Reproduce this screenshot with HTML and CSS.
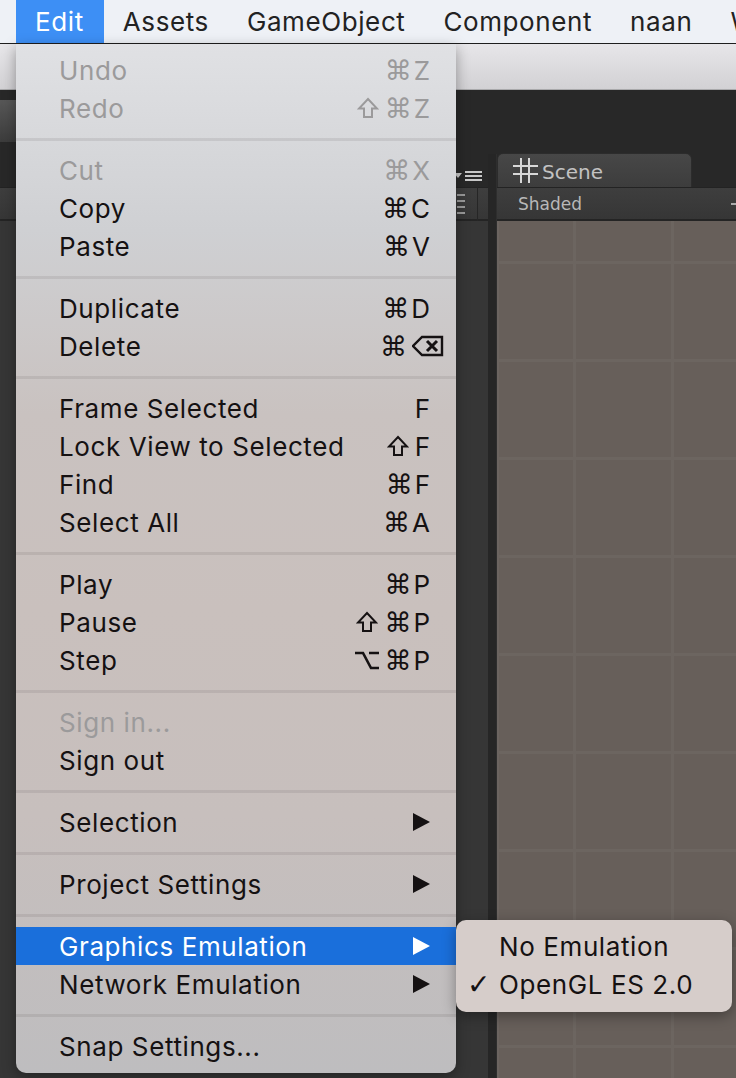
FILE: index.html
```html
<!DOCTYPE html>
<html>
<head>
<meta charset="utf-8">
<link rel="stylesheet" href="styles.css">
</head>
<body>
<div class="screen">
  <div class="menubar">
    <span class="mb-item active">Edit</span>
    <span class="mb-item">Assets</span>
    <span class="mb-item">GameObject</span>
    <span class="mb-item">Component</span>
    <span class="mb-item">naan</span>
    <span class="mb-item">Window</span>
  </div>
  <div class="light-toolbar"></div>
  <div class="workspace">
    <div class="toolstrip"><div class="toolbtns"></div></div>
    <div class="panels">
      <div class="left-panel">
        <div class="tabbar left-tabbar">
          <svg class="tabmenu" width="30" height="14" viewBox="0 0 30 14">
            <polygon points="0,4 8,4 4,9" fill="#c8c8c8"/>
            <rect x="11" y="2" width="17" height="2" fill="#c8c8c8"/>
            <rect x="11" y="6" width="17" height="2" fill="#c8c8c8"/>
            <rect x="11" y="10" width="17" height="2" fill="#c8c8c8"/>
          </svg>
        </div>
        <div class="panel-toolbar left-toolbar">
          <div class="grip"></div>
          <div class="vline"></div>
        </div>
        <div class="panel-body"></div>
      </div>
      <div class="divider"></div>
      <div class="scene-panel">
        <div class="tabbar scene-tabbar">
          <div class="tab">
            <svg class="hash" width="25" height="25" viewBox="0 0 25 25">
              <g fill="#d8d8d8">
                <rect x="7" y="0" width="2" height="25"/>
                <rect x="15" y="0" width="2" height="25"/>
                <rect x="0" y="7" width="25" height="2"/>
                <rect x="0" y="15" width="25" height="2"/>
              </g>
            </svg>
            <span class="tab-label">Scene</span>
          </div>
        </div>
        <div class="panel-toolbar scene-toolbar">
          <span class="shaded">Shaded</span>
          <span class="tb-caret"></span>
        </div>
        <div class="scene-view"></div>
      </div>
    </div>
  </div>

  <div class="menu">
    <div class="item disabled"><span class="label">Undo</span><span class="sc"><span class="sym">⌘</span>Z</span></div>
    <div class="item disabled"><span class="label">Redo</span><span class="sc"><svg class="shift" width="22" height="22" viewBox="0 0 22 22"><path d="M11 2 L20 11.5 H15 V20 H7 V11.5 H2 Z" fill="none" stroke="currentColor" stroke-width="2" stroke-linejoin="miter"/></svg><span class="sym">⌘</span>Z</span></div>
    <div class="sep"></div>
    <div class="item disabled"><span class="label">Cut</span><span class="sc"><span class="sym">⌘</span>X</span></div>
    <div class="item"><span class="label">Copy</span><span class="sc"><span class="sym">⌘</span>C</span></div>
    <div class="item"><span class="label">Paste</span><span class="sc"><span class="sym">⌘</span>V</span></div>
    <div class="sep"></div>
    <div class="item"><span class="label">Duplicate</span><span class="sc"><span class="sym">⌘</span>D</span></div>
    <div class="item"><span class="label">Delete</span><span class="sc wide"><span class="sym">⌘</span><svg class="erase" width="32" height="22" viewBox="0 0 32 22"><path d="M10 2 H30 V20 H10 L1 11 Z" fill="none" stroke="currentColor" stroke-width="2.4" stroke-linejoin="miter"/><path d="M15 6 L25 16 M25 6 L15 16" stroke="currentColor" stroke-width="3"/></svg></span></div>
    <div class="sep"></div>
    <div class="item"><span class="label">Frame Selected</span><span class="sc">F</span></div>
    <div class="item"><span class="label">Lock View to Selected</span><span class="sc"><svg class="shift" width="22" height="22" viewBox="0 0 22 22"><path d="M11 2 L20 11.5 H15 V20 H7 V11.5 H2 Z" fill="none" stroke="currentColor" stroke-width="2" stroke-linejoin="miter"/></svg>F</span></div>
    <div class="item"><span class="label">Find</span><span class="sc"><span class="sym">⌘</span>F</span></div>
    <div class="item"><span class="label">Select All</span><span class="sc"><span class="sym">⌘</span>A</span></div>
    <div class="sep"></div>
    <div class="item"><span class="label">Play</span><span class="sc"><span class="sym">⌘</span>P</span></div>
    <div class="item"><span class="label">Pause</span><span class="sc"><svg class="shift" width="22" height="22" viewBox="0 0 22 22"><path d="M11 2 L20 11.5 H15 V20 H7 V11.5 H2 Z" fill="none" stroke="currentColor" stroke-width="2" stroke-linejoin="miter"/></svg><span class="sym">⌘</span>P</span></div>
    <div class="item"><span class="label">Step</span><span class="sc"><svg class="opt" width="26" height="20" viewBox="0 0 26 20"><path d="M1 3 H9 L17 18 H25 M15 3 H25" fill="none" stroke="currentColor" stroke-width="2.6"/></svg><span class="sym">⌘</span>P</span></div>
    <div class="sep"></div>
    <div class="item disabled"><span class="label">Sign in...</span></div>
    <div class="item"><span class="label">Sign out</span></div>
    <div class="sep"></div>
    <div class="item"><span class="label">Selection</span><svg class="arrow" width="17" height="18" viewBox="0 0 17 18"><polygon points="0,0 17,9 0,18"/></svg></div>
    <div class="sep"></div>
    <div class="item"><span class="label">Project Settings</span><svg class="arrow" width="17" height="18" viewBox="0 0 17 18"><polygon points="0,0 17,9 0,18"/></svg></div>
    <div class="sep"></div>
    <div class="item selected"><span class="label">Graphics Emulation</span><svg class="arrow" width="17" height="18" viewBox="0 0 17 18"><polygon points="0,0 17,9 0,18"/></svg></div>
    <div class="item"><span class="label">Network Emulation</span><svg class="arrow" width="17" height="18" viewBox="0 0 17 18"><polygon points="0,0 17,9 0,18"/></svg></div>
    <div class="sep"></div>
    <div class="item"><span class="label">Snap Settings...</span></div>
  </div>

  <div class="submenu">
    <div class="sub-item"><span class="check"></span><span class="label">No Emulation</span></div>
    <div class="sub-item"><span class="check">✓</span><span class="label">OpenGL ES 2.0</span></div>
  </div>
</div>
</body>
</html>
```

FILE: styles.css
```css
* { box-sizing: border-box; }
html, body { margin: 0; padding: 0; }
body {
  width: 736px;
  height: 1078px;
  overflow: hidden;
  background: #333;
  font-family: "Inter", "Liberation Sans", sans-serif;
}
.screen {
  position: relative;
  width: 736px;
  height: 1078px;
  display: flex;
  flex-direction: column;
  overflow: hidden;
}

/* menubar */
.menubar {
  height: 44px;
  flex: none;
  display: flex;
  align-items: stretch;
  padding-left: 16px;
  background: #eef1f6;
  border-bottom: 1px solid #1e1e1e;
  white-space: nowrap;
  overflow: hidden;
}
.mb-item {
  display: flex;
  align-items: center;
  padding: 0 19px;
  font-size: 26px;
  color: #222;
  letter-spacing: 0.6px;
}
.mb-item.active {
  background: #3d8ff5;
  color: #fff;
  padding-right: 20px;
}

.light-toolbar {
  height: 46px;
  flex: none;
  background: linear-gradient(#e7e6e9, #d2d1d4);
  border-bottom: 1px solid #a9a9ab;
}

.workspace {
  flex: 1;
  display: flex;
  flex-direction: column;
  background: #282828;
}
.toolstrip {
  height: 64px;
  flex: none;
  padding-top: 10px;
}
.toolbtns {
  width: 200px;
  height: 42px;
  background: linear-gradient(#575757, #3c3c3c);
  border-right: 1px solid #222;
}
.panels {
  flex: 1;
  display: flex;
}
.left-panel {
  width: 488px;
  display: flex;
  flex-direction: column;
  flex: none;
}
.tabbar {
  height: 33px;
  flex: none;
  background: #282828;
  display: flex;
}
.left-tabbar {
  justify-content: flex-end;
  align-items: center;
  padding-right: 4px;
  padding-top: 10px;
}
.panel-toolbar {
  height: 34px;
  flex: none;
  background: linear-gradient(#3e3e3e, #363636);
  border-top: 1px solid #232323;
  border-bottom: 2px solid #242424;
  display: flex;
  align-items: center;
}
.left-toolbar {
  justify-content: flex-end;
}
.grip {
  width: 8px;
  height: 20px;
  margin-right: 12px;
  background: repeating-linear-gradient(#9a9a9a 0 2px, transparent 2px 6px);
}
.vline {
  width: 1px;
  height: 34px;
  background: #262626;
  margin-right: 10px;
}
.panel-body {
  flex: 1;
  background: #363636;
}
.divider {
  width: 9px;
  flex: none;
  background: #262626;
  border-right: 1px solid #2e2e2e;
}
.scene-panel {
  flex: 1;
  display: flex;
  flex-direction: column;
}
.scene-tabbar {
  align-items: flex-end;
}
.tab {
  width: 195px;
  height: 34px;
  background: linear-gradient(#474747, #3d3d3d);
  border: 1px solid #2c2c2c;
  border-bottom: none;
  border-radius: 6px 6px 0 0;
  display: flex;
  align-items: center;
  gap: 4px;
  padding-left: 15px;
}
.hash { flex: none; }
.tab-label {
  font-family: "DejaVu Sans", sans-serif;
  font-size: 20px;
  color: #c2c2c2;
  margin-top: 2px;
}
.scene-toolbar {
  padding-left: 21px;
  justify-content: space-between;
}
.shaded {
  font-family: "DejaVu Sans", sans-serif;
  font-size: 17px;
  color: #b8b8b8;
}
.tb-caret {
  width: 5px;
  height: 2px;
  background: #aaa;
}
.scene-view {
  flex: 1;
  background-color: #675f5a;
  background-image:
    linear-gradient(90deg, transparent 0 74px, #6c6560 74px 77px, transparent 77px),
    linear-gradient(180deg, transparent 0 40px, #6c6560 40px 43px, transparent 43px);
  background-size: 98px 100%, 100% 98px;
  border-left: 2px solid #6b6460;
}

/* dropdown menu */
.menu {
  position: absolute;
  left: 16px;
  top: 44px;
  width: 440px;
  height: 1029px;
  padding: 7px 0 8px;
  border-radius: 0 0 10px 10px;
  background: linear-gradient(180deg,
    #e0e1e4 0%,
    #cfd0d3 18%,
    #c9c2c0 36%,
    #c9c0bd 55%,
    #c7bfbd 75%,
    #bebdbf 100%);
  box-shadow: 0 4px 14px rgba(0,0,0,0.35);
  font-size: 26px;
  color: #151112;
  display: flex;
  flex-direction: column;
}
.item {
  height: 38px;
  flex: none;
  display: flex;
  align-items: center;
  justify-content: space-between;
  padding: 0 26px 0 43px;
  white-space: nowrap;
  letter-spacing: 0.6px;
}
.item.disabled { color: #9b9a9b; }
.item.selected {
  background: #1a6fdb;
  color: #fff;
}
.item .arrow { fill: #151112; }
.item.selected .arrow { fill: #fff; }
.sc {
  display: flex;
  align-items: center;
  letter-spacing: 0;
}
.sc.wide { margin-right: -14px; }
.sym {
  font-family: "DejaVu Sans", sans-serif;
  font-size: 27px;
  margin-right: 2px;
}
.shift { flex: none; margin-right: 6px; }
.opt { flex: none; margin-right: 4px; }
.erase { flex: none; margin-left: 3px; }
.sep {
  height: 24px;
  flex: none;
  display: flex;
  align-items: center;
}
.sep::before {
  content: "";
  display: block;
  width: 100%;
  height: 3px;
  background: rgba(80, 70, 70, 0.12);
}

/* submenu */
.submenu {
  position: absolute;
  left: 456px;
  top: 920px;
  width: 276px;
  height: 92px;
  padding: 7px 0 9px;
  border-radius: 10px;
  background: #d6cdca;
  box-shadow: 0 4px 14px rgba(0,0,0,0.35);
  font-size: 26px;
  color: #151112;
}
.sub-item {
  height: 38px;
  display: flex;
  align-items: center;
  padding-left: 11px;
  white-space: nowrap;
  letter-spacing: 0.6px;
}
.check {
  width: 32px;
  flex: none;
  font-family: "DejaVu Sans", sans-serif;
  font-size: 28px;
  font-weight: bold;
}
```
